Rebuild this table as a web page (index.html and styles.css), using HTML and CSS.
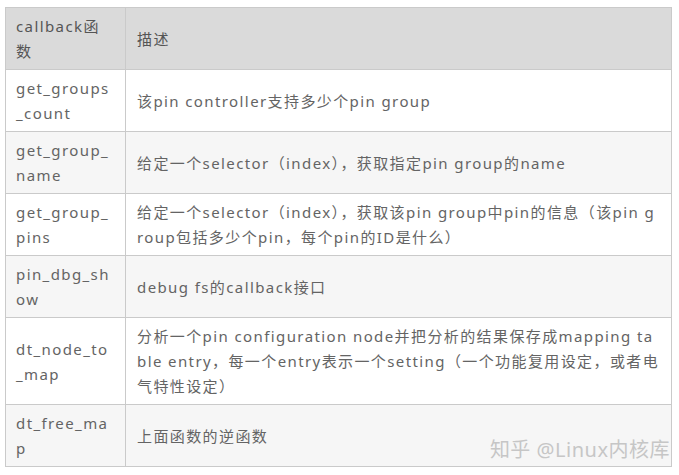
FILE: index.html
```html
<!DOCTYPE html>
<html lang="zh-CN">
<head>
<meta charset="utf-8">
<link rel="stylesheet" href="styles.css">
</head>
<body>
<div class="page">
  <table class="api">
    <colgroup><col class="c1"><col class="c2"></colgroup>
    <thead>
      <tr><th>callback函数</th><th>描述</th></tr>
    </thead>
    <tbody>
      <tr><td>get_groups_count</td><td>该pin controller支持多少个pin group</td></tr>
      <tr class="alt"><td>get_group_name</td><td>给定一个selector（index），获取指定pin group的name</td></tr>
      <tr><td>get_group_pins</td><td>给定一个selector（index），获取该pin group中pin的信息（该pin group包括多少个pin，每个pin的ID是什么）</td></tr>
      <tr class="alt"><td>pin_dbg_show</td><td>debug fs的callback接口</td></tr>
      <tr><td>dt_node_to_map</td><td>分析一个pin configuration node并把分析的结果保存成mapping table entry，每一个entry表示一个setting（一个功能复用设定，或者电气特性设定）</td></tr>
      <tr class="alt"><td>dt_free_map</td><td>上面函数的逆函数</td></tr>
    </tbody>
  </table>
  <div class="watermark">知乎 @Linux内核库</div>
</div>
</body>
</html>
```

FILE: styles.css
```css
html, body {
  margin: 0;
  padding: 0;
  background: #ffffff;
}
.page {
  position: relative;
  width: 679px;
  height: 475px;
  padding: 7px 7px 0 5px;
  box-sizing: border-box;
  font-family: "Noto Sans", "Noto Sans CJK SC", sans-serif;
  font-size: 15px;
  letter-spacing: 1.4px;
  color: #646464;
}
.api {
  width: 667px;
  border-collapse: collapse;
  table-layout: fixed;
}
.c1 { width: 120px; }
.api th, .api td {
  border: 1px solid #cacaca;
  padding: 6px 14px 5px 10px;
  line-height: 25px;
  text-align: left;
  vertical-align: middle;
  font-weight: normal;
  word-break: break-all;
}
.api th + th, .api td + td {
  padding-left: 11px;
  padding-right: 11px;
}
.api thead th {
  background: #dadada;
  color: #555555;
}
.api tr.alt td {
  background: #f6f6f6;
}
.watermark {
  position: absolute;
  right: 9px;
  bottom: 13px;
  font-size: 20px;
  line-height: 24px;
  letter-spacing: 0.5px;
  color: #c6c6c6;
}
```
